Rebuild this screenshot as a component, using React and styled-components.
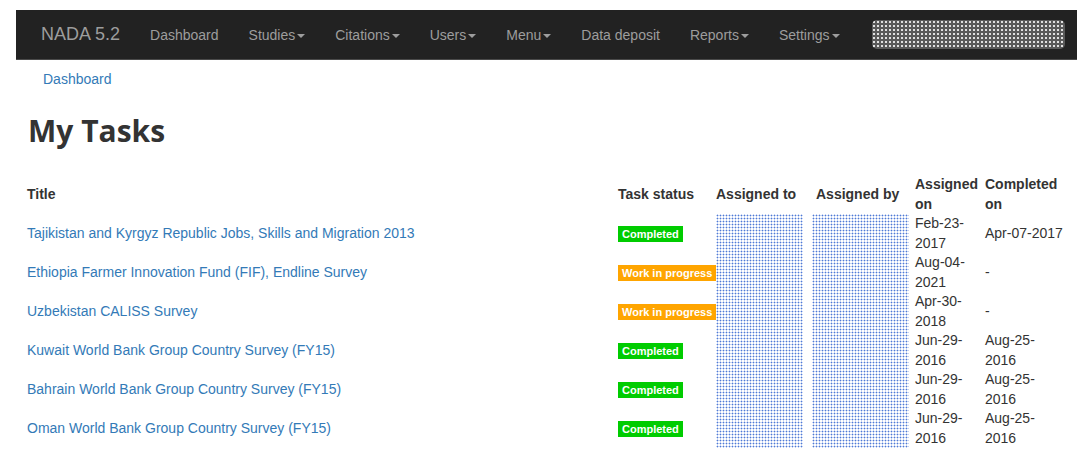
import styled, { createGlobalStyle } from 'styled-components';

const tasks = [
    { title: 'Tajikistan and Kyrgyz Republic Jobs, Skills and Migration 2013', status: 'done', assigned: 'Feb-23-2017', completed: 'Apr-07-2017' },
    { title: 'Ethiopia Farmer Innovation Fund (FIF), Endline Survey', status: 'progress', assigned: 'Aug-04-2021', completed: '-' },
    { title: 'Uzbekistan CALISS Survey', status: 'progress', assigned: 'Apr-30-2018', completed: '-' },
    { title: 'Kuwait World Bank Group Country Survey (FY15)', status: 'done', assigned: 'Jun-29-2016', completed: 'Aug-25-2016' },
    { title: 'Bahrain World Bank Group Country Survey (FY15)', status: 'done', assigned: 'Jun-29-2016', completed: 'Aug-25-2016' },
    { title: 'Oman World Bank Group Country Survey (FY15)', status: 'done', assigned: 'Jun-29-2016', completed: 'Aug-25-2016' },
];

const navItems = [
    { label: 'Dashboard' },
    { label: 'Studies', menu: true },
    { label: 'Citations', menu: true },
    { label: 'Users', menu: true },
    { label: 'Menu', menu: true },
    { label: 'Data deposit' },
    { label: 'Reports', menu: true },
    { label: 'Settings', menu: true },
];

function App() {
    return (
        <Page>
            <GlobalStyle />
            <Navbar>
                <Brand>NADA 5.2</Brand>
                {navItems.map((item) => (
                    <NavLink key={item.label}>
                        {item.label}
                        {item.menu && <Caret />}
                    </NavLink>
                ))}
                <SearchBox />
            </Navbar>
            <Container>
                <Breadcrumb>Dashboard</Breadcrumb>
                <Heading>My Tasks</Heading>
                <Table>
                    <colgroup>
                        <col style={{ width: 591 }} />
                        <col style={{ width: 98 }} />
                        <col style={{ width: 100 }} />
                        <col style={{ width: 99 }} />
                        <col style={{ width: 70 }} />
                        <col style={{ width: 89 }} />
                    </colgroup>
                    <thead>
                        <tr>
                            <Th>Title</Th>
                            <Th>Task status</Th>
                            <Th>Assigned to</Th>
                            <Th>Assigned by</Th>
                            <Th $pad="0 2px 0 4px">Assigned on</Th>
                            <Th $pad="0 6px 0 4px">Completed on</Th>
                        </tr>
                    </thead>
                    <tbody>
                        {tasks.map((task) => (
                            <tr key={task.title}>
                                <Td><TitleLink>{task.title}</TitleLink></Td>
                                <Td>
                                    <Badge $status={task.status}>
                                        {task.status === 'done' ? 'Completed' : 'Work in progress'}
                                    </Badge>
                                </Td>
                                <Redacted $pad="0 9px 0 4px" />
                                <Redacted $pad="0 2px 0 0" />
                                <Td $pad="0 2px 0 4px">{task.assigned}</Td>
                                <Td $pad="0 6px 0 4px">{task.completed}</Td>
                            </tr>
                        ))}
                    </tbody>
                </Table>
            </Container>
        </Page>
    );
}

const GlobalStyle = createGlobalStyle`
    body {
        margin : 0;
        background : #ffffff;
        font-family : "Liberation Sans", Arial, sans-serif;
        font-size : 14px;
        color : #333333;
    }
`;

const Page = styled.div`
    padding : 10px 15px 0 16px;
`;

const Navbar = styled.div`
    display : flex;
    align-items : center;

    height : 49px;

    background-color : #222222;
    border-bottom : 1px solid #4a4a4a;
`;

const Brand = styled.span`
    padding : 0 15px 0 25px;

    font-size : 18px;
    color : #9d9d9d;
`;

const NavLink = styled.span`
    display : flex;
    align-items : center;

    padding : 0 15px;

    font-size : 14px;
    color : #9d9d9d;
`;

const Caret = styled.span`
    width : 0;
    height : 0;
    margin-left : 2px;
    margin-top : 2px;

    border-top : 4px solid #9d9d9d;
    border-left : 4px solid transparent;
    border-right : 4px solid transparent;
`;

const SearchBox = styled.div`
    width : 193px;
    height : 29px;
    margin-left : auto;
    margin-right : 12px;

    border-radius : 5px;
    background-color : #5a5a5a;
    background-image : radial-gradient(circle, #e0e0e0 0.75px, transparent 1.05px);
    background-size : 4px 4px;
`;

const Container = styled.div`
    padding : 0 12px;
`;

const Breadcrumb = styled.div`
    margin-top : 9px;
    padding : 0 15px;

    line-height : 20px;
    color : #337ab7;
`;

const Heading = styled.h1`
    margin : 25px 0 28px;

    font-family : "Open Sans", "Liberation Sans", sans-serif;
    font-size : 30px;
    font-weight : 700;
    line-height : 33px;
    color : #333333;
`;

const Table = styled.table`
    width : 1047px;
    margin-left : -5px;

    table-layout : fixed;
    border-collapse : collapse;
`;

const Th = styled.th`
    height : 39px;
    padding : ${(p) => p.$pad || '0 4px'};

    text-align : left;
    vertical-align : middle;
    font-weight : 700;
    line-height : 19.5px;
    color : #333333;
`;

const Td = styled.td`
    height : 39px;
    padding : ${(p) => p.$pad || '0 4px'};

    vertical-align : middle;
    line-height : 19.5px;
    color : #333333;
`;

const Redacted = styled.td`
    padding : ${(p) => p.$pad};

    background-color : #ffffff;
    background-image : radial-gradient(circle, #4f7ad6 0.8px, transparent 1.1px);
    background-size : 3px 3px;
    background-clip : content-box;
    background-origin : content-box;
`;

const TitleLink = styled.span`
    color : #337ab7;
`;

const Badge = styled.span`
    display : inline-block;

    padding : 0 4px;

    font-size : 11px;
    font-weight : 700;
    line-height : 16px;
    white-space : nowrap;
    color : #ffffff;

    background-color : ${(p) => (p.$status === 'done' ? '#00cc00' : '#ffa500')};
`;

export default App;
